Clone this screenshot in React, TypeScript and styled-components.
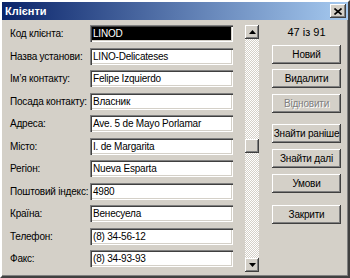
import styled, { createGlobalStyle } from 'styled-components';

const GlobalStyle = createGlobalStyle`
  html, body {
    margin: 0;
    padding: 0;
    background: #d4d0c8;
  }
  body {
    font-family: 'Liberation Sans', Arial, sans-serif;
    font-size: 10px;
    letter-spacing: -0.2px;
  }
`;

const Window = styled.div`
  width: 350px;
  height: 278px;
  box-sizing: border-box;
  background: #d4d0c8;
  border: 2px solid;
  border-color: #ffffff #404040 #404040 #ffffff;
  box-shadow: inset -1px -1px #808080;
  display: flex;
  flex-direction: column;
`;

const TitleBar = styled.div`
  height: 18px;
  flex-shrink: 0;
  background: linear-gradient(to right, #0a246a, #a6caf0);
  display: flex;
  align-items: center;
  justify-content: space-between;
  padding: 0 2px 0 3px;
`;

const Title = styled.span`
  color: #ffffff;
  font-weight: bold;
  font-size: 11px;
  letter-spacing: 0;
`;

const CloseButton = styled.div`
  width: 16px;
  height: 14px;
  box-sizing: border-box;
  background: #d4d0c8;
  box-shadow: inset -1px -1px #404040, inset 1px 1px #ffffff, inset -2px -2px #808080;
  display: flex;
  align-items: center;
  justify-content: center;
`;

const Body = styled.div`
  flex: 1;
  display: flex;
  padding: 5px 0 0 8px;
`;

const Form = styled.div`
  display: grid;
  grid-template-columns: 80px 143px;
  grid-auto-rows: 17px;
  row-gap: 5.5px;
  align-content: start;
`;

const Label = styled.label`
  display: flex;
  align-items: center;
  color: #000;
  white-space: nowrap;
`;

const Field = styled.div<{ selected?: boolean }>`
  box-sizing: border-box;
  height: 17px;
  background: ${p => (p.selected ? '#000000' : '#ffffff')};
  color: ${p => (p.selected ? '#ffffff' : '#000000')};
  box-shadow: inset 1px 1px #808080, inset 2px 2px #404040, inset -1px -1px #ffffff, inset -2px -2px #d4d0c8;
  padding: 0 3px;
  display: flex;
  align-items: center;
  white-space: nowrap;
  overflow: hidden;
`;

const ScrollBar = styled.div`
  width: 14px;
  height: 247px;
  margin-left: 12px;
  display: flex;
  flex-direction: column;
  background: repeating-conic-gradient(#d4d0c8 0 25%, #ffffff 0 50%) 0 0 / 2px 2px;
`;

const ScrollButton = styled.div`
  width: 14px;
  height: 14px;
  flex-shrink: 0;
  box-sizing: border-box;
  background: #d4d0c8;
  box-shadow: inset -1px -1px #404040, inset 1px 1px #ffffff, inset -2px -2px #808080;
  display: flex;
  align-items: center;
  justify-content: center;
`;

const ScrollSpace = styled.div<{ size: number }>`
  flex: ${p => p.size};
`;

const Side = styled.div`
  width: 69px;
  margin-left: 13px;
  display: flex;
  flex-direction: column;
  padding-top: 1px;
`;

const Counter = styled.div`
  height: 13px;
  line-height: 13px;
  font-size: 11px;
  letter-spacing: 0;
  text-align: center;
  color: #000;
`;

const Button = styled.div<{ top: number; disabled?: boolean }>`
  height: 19px;
  margin-top: ${p => p.top}px;
  box-sizing: border-box;
  background: #d4d0c8;
  box-shadow: inset -1px -1px #404040, inset 1px 1px #ffffff, inset -2px -2px #808080;
  display: flex;
  align-items: center;
  justify-content: center;
  white-space: nowrap;
  color: ${p => (p.disabled ? '#808080' : '#000000')};
  text-shadow: ${p => (p.disabled ? '1px 1px #ffffff' : 'none')};
`;

const rows: [string, string][] = [
  ['Код клієнта:', 'LINOD'],
  ['Назва установи:', 'LINO-Delicateses'],
  ['Ім’я контакту:', 'Felipe Izquierdo'],
  ['Посада контакту:', 'Власник'],
  ['Адреса:', 'Ave. 5 de Mayo Porlamar'],
  ['Місто:', 'I. de Margarita'],
  ['Регіон:', 'Nueva Esparta'],
  ['Поштовий індекс:', '4980'],
  ['Країна:', 'Венесуела'],
  ['Телефон:', '(8) 34-56-12'],
  ['Факс:', '(8) 34-93-93'],
];

const buttons: { text: string; top: number; disabled?: boolean }[] = [
  { text: 'Новий', top: 6 },
  { text: 'Видалити', top: 5 },
  { text: 'Відновити', top: 6, disabled: true },
  { text: 'Знайти раніше', top: 11 },
  { text: 'Знайти далі', top: 6 },
  { text: 'Умови', top: 6 },
  { text: 'Закрити', top: 12 },
];

const Arrow = ({ down }: { down?: boolean }) => (
  <svg width="7" height="4" viewBox="0 0 7 4">
    <path d={down ? 'M0 0H7L3.5 4Z' : 'M3.5 0L7 4H0Z'} fill="#000" />
  </svg>
);

const App = () => {
  return (
    <>
      <GlobalStyle />
      <Window>
        <TitleBar>
          <Title>Клієнти</Title>
          <CloseButton>
            <svg width="8" height="7" viewBox="0 0 8 7">
              <path d="M0.5 0.5L7.5 6.5M7.5 0.5L0.5 6.5" stroke="#000" strokeWidth="1.6" />
            </svg>
          </CloseButton>
        </TitleBar>
        <Body>
          <Form>
            {rows.map(([label, value], i) => [
              <Label key={'l' + i}>{label}</Label>,
              <Field key={'f' + i} selected={i === 0}>{value}</Field>,
            ])}
          </Form>
          <ScrollBar>
            <ScrollButton><Arrow /></ScrollButton>
            <ScrollSpace size={100} />
            <ScrollButton />
            <ScrollSpace size={105} />
            <ScrollButton><Arrow down /></ScrollButton>
          </ScrollBar>
          <Side>
            <Counter>47 із 91</Counter>
            {buttons.map(b => (
              <Button key={b.text} top={b.top} disabled={b.disabled}>{b.text}</Button>
            ))}
          </Side>
        </Body>
      </Window>
    </>
  );
};

export default App;
